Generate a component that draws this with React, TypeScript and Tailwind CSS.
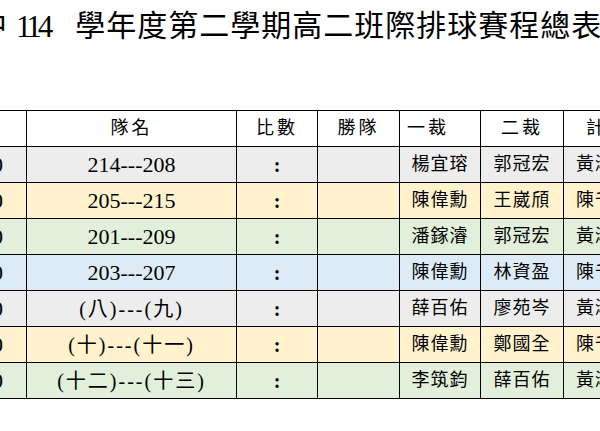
const serif = "font-['Liberation_Serif','Noto_Sans_CJK_TC',serif]";

type Row = {
  time: string;
  teams: string;
  ref1: string;
  ref2: string;
  score: string;
  bg: string;
  cjk?: boolean;
};

const rows: Row[] = [
  { time: "12:30", teams: "214---208", ref1: "楊宜瑢", ref2: "郭冠宏", score: "黃淑芬", bg: "bg-[#ededed]" },
  { time: "12:30", teams: "205---215", ref1: "陳偉勳", ref2: "王崴頎", score: "陳千慧", bg: "bg-[#fff2cc]" },
  { time: "12:30", teams: "201---209", ref1: "潘鎵濬", ref2: "郭冠宏", score: "黃淑芬", bg: "bg-[#e2efda]" },
  { time: "12:30", teams: "203---207", ref1: "陳偉勳", ref2: "林資盈", score: "陳千慧", bg: "bg-[#ddebf7]" },
  { time: "12:30", teams: "(八)---(九)", ref1: "薛百佑", ref2: "廖苑岑", score: "黃淑芬", bg: "bg-[#ededed]", cjk: true },
  { time: "12:30", teams: "(十)---(十一)", ref1: "陳偉勳", ref2: "鄭國全", score: "陳千慧", bg: "bg-[#fff2cc]", cjk: true },
  { time: "12:30", teams: "(十二)---(十三)", ref1: "李筑鈞", ref2: "薛百佑", score: "黃淑芬", bg: "bg-[#e2efda]", cjk: true },
];

const cell = "border border-black h-[36px] p-0 align-middle whitespace-nowrap";

export default function App() {
  return (
    <div className={`w-[600px] h-[431px] overflow-hidden bg-white text-black ${serif}`}>
      {/* Title */}
      <div className="h-[52px] flex items-center whitespace-nowrap -ml-[54px] leading-none">
        <span className="text-[30px] tracking-[1px]">高中</span>
        <span className="ml-[8px] text-[31px] tracking-[-4px]">114</span>
        <span className="ml-[26px] text-[30px] tracking-[1px]">學年度第二學期高二班際排球賽程總表</span>
      </div>

      {/* Schedule */}
      <table className="mt-[58px] -ml-[94px] w-[777px] table-fixed border-collapse">
        <colgroup>
          <col className="w-[120px]" />
          <col className="w-[210px]" />
          <col className="w-[81px]" />
          <col className="w-[82px]" />
          <col className="w-[81px]" />
          <col className="w-[83px]" />
          <col className="w-[120px]" />
        </colgroup>
        <thead>
          <tr className="bg-white text-[18px] tracking-[3px]">
            <th className={`${cell} font-normal`}>時間</th>
            <th className={`${cell} font-normal text-center`}>隊名</th>
            <th className={`${cell} font-normal text-center`}>比數</th>
            <th className={`${cell} font-normal text-center`}>勝隊</th>
            <th className={`${cell} font-normal text-left pl-[7px]`}>一裁</th>
            <th className={`${cell} font-normal text-center`}>二裁</th>
            <th className={`${cell} font-normal text-left pl-[22px]`}>計分</th>
          </tr>
        </thead>
        <tbody>
          {rows.map((r, i) => (
            <tr key={i} className={r.bg}>
              <td className={`${cell} text-right pr-[23px] text-[22px]`}>{r.time}</td>
              <td
                className={`${cell} text-center ${
                  r.cjk ? "text-[20px] tracking-[2px]" : "text-[22px]"
                }`}
              >
                {r.teams}
              </td>
              <td className={`${cell} text-center text-[20px] font-bold`}>:</td>
              <td className={cell}></td>
              <td className={`${cell} text-center text-[18px] tracking-[1px]`}>{r.ref1}</td>
              <td className={`${cell} text-center text-[18px] tracking-[1px]`}>{r.ref2}</td>
              <td className={`${cell} text-left pl-[12px] text-[18px] tracking-[1px]`}>{r.score}</td>
            </tr>
          ))}
        </tbody>
      </table>
    </div>
  );
}
